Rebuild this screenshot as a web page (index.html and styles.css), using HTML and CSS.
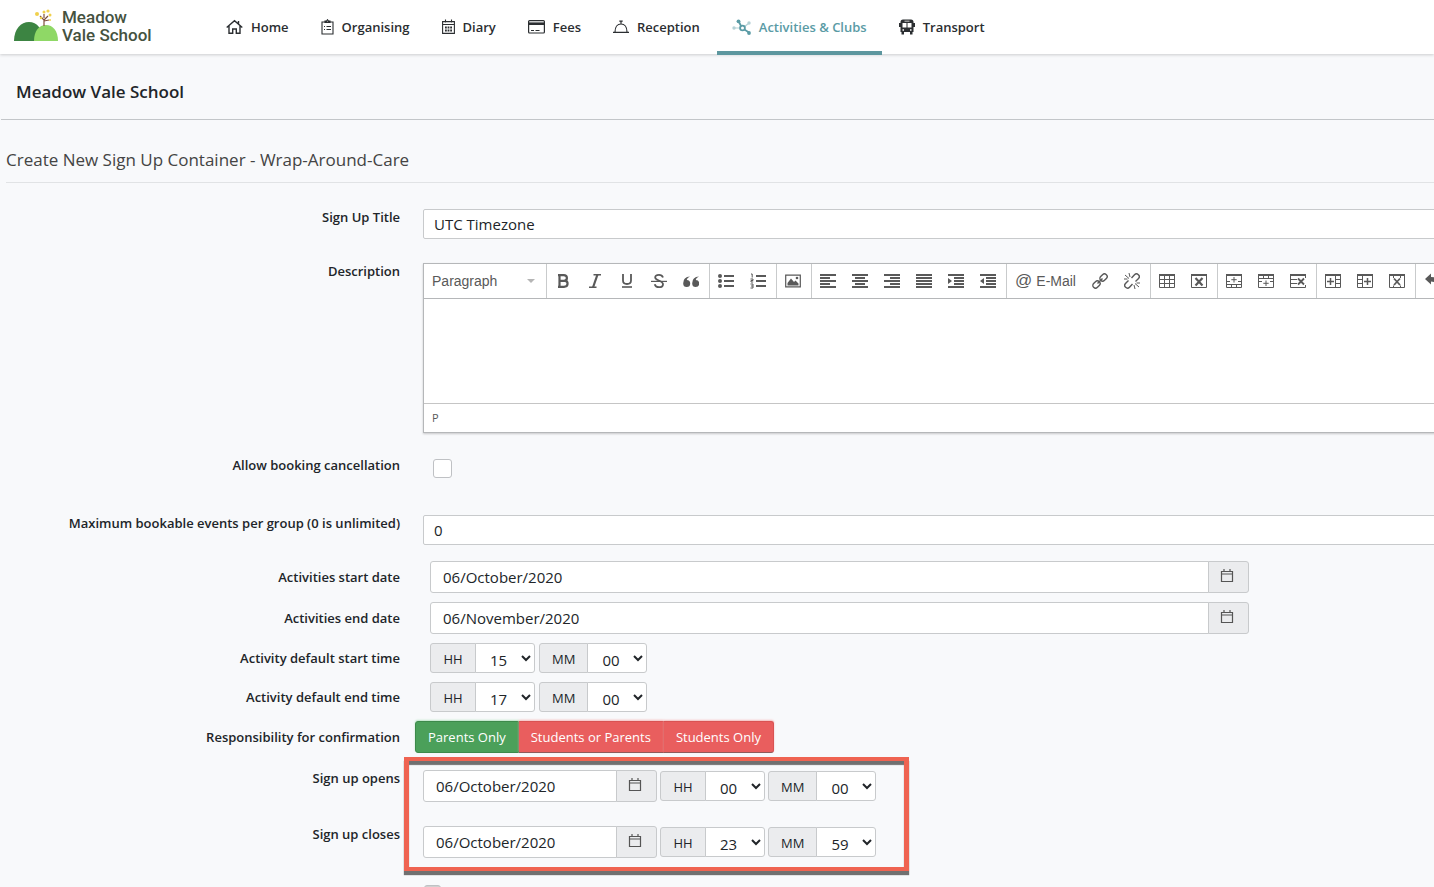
FILE: index.html
```html
<!DOCTYPE html>
<html lang="en">
<head>
<meta charset="utf-8">
<meta name="viewport" content="width=device-width, initial-scale=1">
<title>Create New Sign Up Container - Meadow Vale School</title>
<link rel="stylesheet" href="styles.css">
</head>
<body>
<svg class="defs" aria-hidden="true">
  <symbol id="calendar" viewBox="0 0 14 14"><path d="M1.5 2.500h11v10h-11zM1.500 5h11M4 0v2.500M10 0v2.500" fill="none" stroke="#555" stroke-width="1.200"/></symbol>
</svg>

<header class="topbar">
  <a class="logo" href="#">
    <svg class="logo-mark" viewBox="0 0 44 34" aria-hidden="true">
      <path d="M0 33C0 21 7 14 15 14s14 7 14 19z" fill="#3c8442"/>
      <path d="M20 33c0-10 5-16 12-16s12 6 12 16z" fill="#8fd866"/>
      <path d="M30 18v-6l-4-4M30 12l4-4M30 13l5-1M30 10V6" fill="none" stroke="#80503c" stroke-width="1.200"/>
      <g fill="#f0d04c"><circle cx="23" cy="6" r="2"/><circle cx="30" cy="4" r="1.500"/><circle cx="34" cy="3" r="1.600"/><circle cx="36" cy="7" r="1.500"/><circle cx="27" cy="10" r="1.200"/><circle cx="36" cy="12" r="1"/></g>
    </svg>
    <span class="logo-text"><span>Meadow</span><span>Vale School</span></span>
  </a>
  <nav class="nav">
    <a href="#"><svg width="17" height="16" viewBox="0 0 17 16"><path d="M.7 8.500 8.500 1.700l7.800 6.800M3 7v7.300h3.700V10h3.600v4.300H14V7M12.500 2v3" fill="none" stroke="currentColor" stroke-width="1.400"/></svg>Home</a>
    <a href="#"><svg width="13" height="16" viewBox="0 0 13 16"><path d="M1 3h11v12H1zM4 3.500V2h1.500L6.500.7 7.500 2H9v1.500zM3 7.500h1M5.500 7.500H10M3 10.500h1M5.500 10.500H10" fill="none" stroke="currentColor" stroke-width="1.100"/></svg>Organising</a>
    <a href="#"><svg width="13" height="16" viewBox="0 0 13 16"><path d="M.6 2.600h11.800v11.800H.6zM.6 5.500h11.800M3.500.5v3M9.500.5v3" fill="none" stroke="currentColor" stroke-width="1.100"/><path d="M3 8.500h7M3 11.500h7" stroke="currentColor" stroke-width="1.800" stroke-dasharray="1.800 .8"/></svg>Diary</a>
    <a href="#"><svg width="17" height="16" viewBox="0 0 17 16"><rect x=".6" y="1.600" width="15.800" height="12.400" rx="1" fill="none" stroke="currentColor" stroke-width="1.200"/><path d="M.6 4.700h15.800" stroke="currentColor" stroke-width="2.600"/><path d="M3 11.500h3M7.500 11.500h4" stroke="currentColor"/></svg>Fees</a>
    <a href="#"><svg width="16" height="16" viewBox="0 0 16 16"><path d="M0 13.400h16M2 13c0-5 2.500-8 6-8s6 3 6 8M8 5V2.500M6.300 2.200h3.400" fill="none" stroke="currentColor" stroke-width="1.200"/></svg>Reception</a>
    <a href="#" class="active" aria-current="page"><svg width="19" height="16" viewBox="0 0 19 16"><path d="m7 3 3 6 7 4.500" fill="none" stroke="currentColor" stroke-width="1.800"/><circle cx="10.500" cy="9" r="2.400" fill="#fff" stroke="currentColor" stroke-width="1.800"/><circle cx="6.500" cy="2.300" r="1.900" fill="currentColor"/><circle cx="17" cy="14" r="1.900" fill="currentColor"/><g opacity=".45" fill="currentColor"><circle cx="2" cy="9" r="1.700"/><circle cx="17" cy="4" r="1.700"/><path d="M2 8.500h6v1H2zM12 7l5-3.500.5 1L13 8z"/></g></svg>Activities &amp; Clubs</a>
    <a href="#"><svg width="16" height="16" viewBox="0 0 16 16"><path fill="currentColor" fill-rule="evenodd" d="M4 .5h8q2.500 0 2.500 2.500V4H16v4h-1.500v5h-1v2.500H11V13H5v2.500H2.500V13h-1V8H0V4h1.500V3Q1.500.5 4 .5zM3.500 4v4.500h4V4zM8.500 4v4.500h4V4zM5.500 1.700v.9h5v-.9zM3.500 10.200v1.500h1.500v-1.500zM11 10.200v1.500h1.500v-1.500z"/></svg>Transport</a>
  </nav>
</header>

<h1 class="school">Meadow Vale School</h1>

<main class="page">
  <h2 class="page-title">Create New Sign Up Container - Wrap-Around-Care</h2>

  <form class="form">
    <div class="row">
      <label for="title">Sign Up Title</label>
      <input class="text bleed" id="title" type="text" value="UTC Timezone">
    </div>

    <div class="row">
      <label for="description">Description</label>
      <div class="editor bleed">
        <div class="toolbar">
          <button type="button" class="format">Paragraph<span class="caret"></span></button>
          <div class="group">
            <button type="button" aria-label="Bold"><svg viewBox="0 0 16 16"><path d="M4.500 2.200h4.300c4 0 4 5 .8 5.500 4.300.5 3.800 6.100-.6 6.100H4.500zM3 2.200h2M3 13.800h2M5 7.800h4.500" fill="none" stroke="currentColor" stroke-width="2.200"/></svg></button>
            <button type="button" aria-label="Italic"><svg viewBox="0 0 16 16"><path d="M6.500 1.700H14M2 14.300h7.500" stroke="currentColor" stroke-width="1.400"/><path d="M10.500 1.500 6 14.500" stroke="currentColor" stroke-width="2.200"/></svg></button>
            <button type="button" aria-label="Underline"><svg viewBox="0 0 16 16"><path d="M4 1v6.500q0 3.500 4 3.500t4-3.500V1" fill="none" stroke="currentColor" stroke-width="1.800"/><path d="M3 14h10" stroke="currentColor" stroke-width="1.600"/></svg></button>
            <button type="button" aria-label="Strikethrough"><svg viewBox="0 0 16 16"><path d="M12 4.500Q11 1.800 8 1.800q-3.800 0-3.800 2.700C4.200 7.500 12 7.500 12 11.200q0 3-4 3-3.500 0-4.300-3" fill="none" stroke="currentColor" stroke-width="1.800"/><path d="M0 8.400h16" stroke="currentColor" stroke-width="1.200"/></svg></button>
            <button type="button" aria-label="Blockquote"><svg viewBox="0 0 16 16"><path fill="currentColor" d="M7 3.500Q4 4.500 3.700 7a3.500 3.500 0 1 1-3.500 3.500Q0 4 7 3.500zM16 3.500q-3 1-3.300 3.500a3.500 3.500 0 1 1-3.500 3.500Q9 4 16 3.500z"/></svg></button>
          </div>
          <div class="group">
            <button type="button" aria-label="Bullet list"><svg viewBox="0 0 16 16"><path d="M6 3h10M6 8h10M6 13h10" stroke="currentColor" stroke-width="2"/><g fill="currentColor"><circle cx="2" cy="3" r="2"/><circle cx="2" cy="8" r="2"/><circle cx="2" cy="13" r="2"/></g></svg></button>
            <button type="button" aria-label="Numbered list"><svg viewBox="0 0 16 16"><path d="M6 3h10M6 8h10M6 13h10" stroke="currentColor" stroke-width="2"/><path d="M1 1h1.200v3.500M.5 6H3v1.500H1V9h2.200M.5 11H3v4H.5M1 13h2" fill="none" stroke="currentColor"/></svg></button>
          </div>
          <div class="group">
            <button type="button" aria-label="Image"><svg viewBox="0 0 16 16"><path d="M.7 2.200h14.600v11.600H.7z" fill="none" stroke="currentColor" stroke-width="1.200"/><path fill="currentColor" d="M2.500 12.500V10L6 5.500l3 3.500 1.500-1.500 3 3v2z"/><circle cx="12" cy="5" r="1.300" fill="currentColor"/></svg></button>
          </div>
          <div class="group">
            <button type="button" aria-label="Align left"><svg viewBox="0 0 16 16"><path fill="currentColor" d="M0 1h16v2H0zM0 4h10v2H0zM0 7h16v2H0zM0 10h10v2H0zM0 13h16v2H0z"/></svg></button>
            <button type="button" aria-label="Align center"><svg viewBox="0 0 16 16"><path fill="currentColor" d="M0 1h16v2H0zM3 4h10v2H3zM0 7h16v2H0zM3 10h10v2H3zM0 13h16v2H0z"/></svg></button>
            <button type="button" aria-label="Align right"><svg viewBox="0 0 16 16"><path fill="currentColor" d="M0 1h16v2H0zM6 4h10v2H6zM0 7h16v2H0zM6 10h10v2H6zM0 13h16v2H0z"/></svg></button>
            <button type="button" aria-label="Justify"><svg viewBox="0 0 16 16"><path fill="currentColor" d="M0 1h16v2H0zM0 4h16v2H0zM0 7h16v2H0zM0 10h16v2H0zM0 13h16v2H0z"/></svg></button>
            <button type="button" aria-label="Increase indent"><svg viewBox="0 0 16 16"><path fill="currentColor" d="M0 1h16v2H0zM6 4h10v2H6zM6 7h10v2H6zM6 10h10v2H6zM0 13h16v2H0zM0 5l4 3-4 3z"/></svg></button>
            <button type="button" aria-label="Decrease indent"><svg viewBox="0 0 16 16"><path fill="currentColor" d="M0 1h16v2H0zM6 4h10v2H6zM6 7h10v2H6zM6 10h10v2H6zM0 13h16v2H0zM4 5 0 8l4 3z"/></svg></button>
          </div>
          <div class="group">
            <button type="button" class="mail"><span class="at">@</span>E-Mail</button>
            <button type="button" aria-label="Insert link"><svg viewBox="0 0 16 16"><g fill="none" stroke="currentColor" stroke-width="1.400" transform="rotate(-45 8 8)"><rect x="-1" y="5.300" width="8" height="5.400" rx="2.700"/><rect x="9" y="5.300" width="8" height="5.400" rx="2.700"/><path d="M4.500 8h7"/></g></svg></button>
            <button type="button" aria-label="Remove link"><svg viewBox="0 0 16 16"><g fill="none" stroke="currentColor" stroke-width="1.400"><path d="M7.500 5 10.500 1.800a2.700 2.700 0 0 1 4 3.700L11.500 8.500M8.500 11 5.500 14.200a2.700 2.700 0 0 1-4-3.700L4.500 7.500"/><path d="M1 2l4 3.500M5 0l1 4M0 6h3.500M15 14l-4-3.500M11 16l-1-4M16 10h-3.500" stroke-width="1"/></g></svg></button>
          </div>
          <div class="group">
            <button type="button" aria-label="Table"><svg viewBox="0 0 16 16"><path d="M.5 1.500h15v13H.5zM.5 6.500h15M.5 10.500h15M5.500 2v12M10.500 2v12" fill="none" stroke="currentColor"/><path d="M0 1h16v2H0z" fill="currentColor"/></svg></button>
            <button type="button" aria-label="Delete table"><svg viewBox="0 0 16 16"><path d="M.5 1.500h15v13H.5z" fill="none" stroke="currentColor"/><path d="M0 1h16v2H0z" fill="currentColor"/><path d="m4.500 5 7 7.500M11.500 5l-7 7.500" stroke="currentColor" stroke-width="2.200"/></svg></button>
          </div>
          <div class="group">
            <button type="button" aria-label="Insert row before"><svg viewBox="0 0 16 16"><path d="M.5 1.500h15v13H.5zM.5 8.500H4M12 8.500h3.500M0 11.500h16M5.500 11.500v3M10.500 11.500v3M8 4v5.500M5.300 6.700h5.400" fill="none" stroke="currentColor"/><path d="M0 1h16v2H0z" fill="currentColor"/></svg></button>
            <button type="button" aria-label="Insert row after"><svg viewBox="0 0 16 16"><path d="M.5 1.500h15v13H.5zM0 5.500h16M5.500 2v3.500M10.500 2v3.500M8 7.500V13M5.300 10.300h5.400M.5 8.500H4M12 8.500h3.500" fill="none" stroke="currentColor"/><path d="M0 1h16v2H0z" fill="currentColor"/></svg></button>
            <button type="button" aria-label="Delete row"><svg viewBox="0 0 16 16"><path d="M15.500 5V1.500H.5v13h15V12M.5 6.500H7M.5 10.500H7" fill="none" stroke="currentColor"/><path d="M0 1h16v2H0z" fill="currentColor"/><path d="m8 5.500 6 6M14 5.500l-6 6" stroke="currentColor" stroke-width="1.800"/></svg></button>
          </div>
          <div class="group">
            <button type="button" aria-label="Insert column before"><svg viewBox="0 0 16 16"><path d="M.5 1.500h15v13H.5zM10.500 2v12M10.500 6.500h5M10.500 10.500h5" fill="none" stroke="currentColor"/><path d="M5.500 5v7M2 8.500h7" stroke="currentColor" stroke-width="1.500"/><path d="M0 1h16v2H0z" fill="currentColor"/></svg></button>
            <button type="button" aria-label="Insert column after"><svg viewBox="0 0 16 16"><path d="M.5 1.500h15v13H.5zM5.500 2v12M.5 6.500h5M.5 10.500h5" fill="none" stroke="currentColor"/><path d="M10.500 5v7M7 8.500h7" stroke="currentColor" stroke-width="1.500"/><path d="M0 1h16v2H0z" fill="currentColor"/></svg></button>
            <button type="button" aria-label="Delete column"><svg viewBox="0 0 16 16"><path d="M.5 1.500h15v13H.5zM4.500 3v2M11.500 3v2M4.500 12.500v2M11.500 12.500v2" fill="none" stroke="currentColor"/><path d="M0 1h16v2H0z" fill="currentColor"/><path d="m5 5.500 6 6.500M11 5.500 5 12" stroke="currentColor" stroke-width="1.800"/></svg></button>
          </div>
          <div class="group">
            <button type="button" aria-label="Undo"><svg viewBox="0 0 16 16"><path fill="currentColor" d="M1 6 7 .5V4q8 0 8 7 0 2-1 4-1-6.500-7-6.500v3z"/></svg></button>
          </div>
        </div>
        <textarea id="description"></textarea>
        <div class="status">P</div>
      </div>
    </div>

    <div class="row check-row">
      <label for="cancel">Allow booking cancellation</label>
      <input id="cancel" type="checkbox">
    </div>

    <div class="row">
      <label for="max">Maximum bookable events per group (0 is unlimited)</label>
      <input class="text bleed" id="max" type="text" value="0">
    </div>

    <div class="compact">
      <div class="row">
        <label for="start">Activities start date</label>
        <div class="date wide"><input id="start" type="text" value="06/October/2020"><button type="button" aria-label="Pick date"><svg><use href="#calendar"/></svg></button></div>
      </div>
      <div class="row">
        <label for="end">Activities end date</label>
        <div class="date wide"><input id="end" type="text" value="06/November/2020"><button type="button" aria-label="Pick date"><svg><use href="#calendar"/></svg></button></div>
      </div>
      <div class="row">
        <label for="sh">Activity default start time</label>
        <div class="times">
          <div class="unit"><label for="sh">HH</label><select id="sh"><option>15</option></select></div>
          <div class="unit"><label for="sm">MM</label><select id="sm"><option>00</option></select></div>
        </div>
      </div>
      <div class="row">
        <label for="eh">Activity default end time</label>
        <div class="times">
          <div class="unit"><label for="eh">HH</label><select id="eh"><option>17</option></select></div>
          <div class="unit"><label for="em">MM</label><select id="em"><option>00</option></select></div>
        </div>
      </div>
      <div class="row">
        <span class="label" id="resp">Responsibility for confirmation</span>
        <div class="choices" role="group" aria-labelledby="resp">
          <button type="button" class="chosen" aria-pressed="true">Parents Only</button>
          <button type="button">Students or Parents</button>
          <button type="button">Students Only</button>
        </div>
      </div>
    </div>

    <div class="window">
      <div class="row">
        <label for="opens">Sign up opens</label>
        <div class="moment">
          <div class="date"><input id="opens" type="text" value="06/October/2020"><button type="button" aria-label="Pick date"><svg><use href="#calendar"/></svg></button></div>
          <div class="unit"><label for="oh">HH</label><select id="oh"><option>00</option></select></div>
          <div class="unit"><label for="om">MM</label><select id="om"><option>00</option></select></div>
        </div>
      </div>
      <div class="row">
        <label for="closes">Sign up closes</label>
        <div class="moment">
          <div class="date"><input id="closes" type="text" value="06/October/2020"><button type="button" aria-label="Pick date"><svg><use href="#calendar"/></svg></button></div>
          <div class="unit"><label for="ch">HH</label><select id="ch"><option>23</option></select></div>
          <div class="unit"><label for="cm">MM</label><select id="cm"><option>59</option></select></div>
        </div>
      </div>
      <div class="highlight"></div>
    </div>

    <div class="row next-row"><span></span><input type="checkbox" aria-label="Option"></div>
  </form>
</main>
</body>
</html>
```
FILE: styles.css
```css
* { box-sizing: border-box; }

body {
  margin: 0;
  height: 100vh;
  overflow: hidden;
  background: #f8f9fb;
  color: #212529;
  font: 13px/20px "Open Sans", "Noto Sans", sans-serif;
}

button, input, select, textarea { margin: 0; font: inherit; color: inherit; }
.defs { position: absolute; width: 0; height: 0; }

/* Header */
.topbar {
  display: flex;
  height: 54px;
  background: #fff;
  box-shadow: 0 1px 3px rgba(0, 0, 0, .18);
}
.logo {
  display: flex;
  flex: none;
  width: 211px;
  padding: 8px 0 0 14px;
  gap: 4px;
  color: #45523f;
  text-decoration: none;
}
.logo-mark { width: 44px; height: 34px; }
.logo-text {
  display: flex;
  flex-direction: column;
  font: 500 17px/18px Roboto, sans-serif;
}
.nav { display: flex; gap: 2px; }
.nav a {
  display: flex;
  align-items: center;
  gap: 8px;
  height: 55px;
  padding: 0 15px 2px;
  color: #2b2e31;
  font-weight: 600;
  text-decoration: none;
  white-space: nowrap;
}
.nav .active { color: #5a9ba5; box-shadow: inset 0 -4px #5d979f; }

/* Headings */
.school {
  margin: 0 0 0 1px;
  padding: 26px 15px 15px;
  border-bottom: 1px solid #c3c6c9;
  font: 600 17px/24px "Open Sans", sans-serif;
}
.page { overflow: hidden; }
.page-title {
  margin: 28px 0 0 6px;
  padding-bottom: 10px;
  border-bottom: 1px solid #e1e3e5;
  color: #444;
  font: 400 17px/24px "Open Sans", sans-serif;
}

/* Form rows */
.form { display: flex; flex-direction: column; gap: 22px; padding-top: 24px; }
.row {
  display: grid;
  grid-template-columns: 29.5% minmax(0, 1fr);
  align-items: start;
}
.row > label, .row > .label {
  padding-right: 23px;
  font-weight: 600;
  text-align: right;
}
.bleed { width: calc(100% + 12px); margin-top: 2px; }
.text {
  height: 30px;
  padding: 0 10px;
  border: 1px solid #c8cacc;
  border-radius: 2px;
  background: #fff;
  font-size: 15px;
}
input[type="checkbox"] {
  appearance: none;
  width: 19px;
  height: 19px;
  margin: 4px 0 0 10px;
  border: 1px solid #bfc1c4;
  border-radius: 3px;
  background: #fff;
}
.check-row { min-height: 36px; }
.next-row { margin-top: 1px; }
.next-row input[type="checkbox"] { width: 17px; margin-left: 1px; background: #d0d0d0; }

/* Rich text editor */
.editor {
  border: 1px solid #b5b7b9;
  background: #fff;
  box-shadow: 0 1px 2px rgba(0, 0, 0, .2);
  color: #595959;
}
.toolbar {
  display: flex;
  height: 35px;
  border-bottom: 1px solid #b5b7b9;
  overflow: hidden;
  font: 14px/20px "Liberation Sans", Arial, sans-serif;
}
.toolbar button {
  display: flex;
  flex: none;
  align-items: center;
  justify-content: center;
  width: 32px;
  padding: 0;
  border: 0;
  background: none;
}
.toolbar svg { width: 16px; height: 16px; }
.toolbar .format { justify-content: space-between; width: 122px; padding: 0 11px 0 8px; }
.caret { border: 4px solid transparent; border-top-color: #b5b5b5; border-bottom: 0; }
.group { display: flex; flex: none; padding-right: 2px; border-left: 1px solid #c9cbcc; }
.toolbar .mail { width: 77px; gap: 4px; }
.at { font-size: 17px; }
.editor textarea {
  display: block;
  width: 100%;
  height: 104px;
  padding: 8px;
  border: 0;
  resize: none;
}
.status {
  height: 29px;
  padding: 4px 8px;
  border-top: 1px solid #c5c5c5;
  font-size: 11px;
}

/* Dates, times and choices */
.compact { display: flex; flex-direction: column; gap: 9px; margin-top: -6px; }
.compact .row { align-items: center; }
.date { display: flex; height: 32px; }
.date input {
  flex: 1;
  min-width: 0;
  padding: 0 12px;
  border: 1px solid #c8cacc;
  border-radius: 3px 0 0 3px;
  background: #fff;
  font-size: 15px;
}
.date button {
  display: grid;
  place-items: center;
  width: 41px;
  margin-left: -1px;
  padding: 0 3px 2px 0;
  border: 1px solid #c8cacc;
  border-radius: 0 3px 3px 0;
  background: #ebecee;
}
.date svg { width: 14px; height: 14px; }
.wide { width: 81%; margin-left: 7px; }
.times { display: flex; gap: 4px; margin-left: 7px; }
.unit { display: flex; height: 30px; }
.unit label {
  min-width: 46px;
  padding: 5px 12px 0;
  border: 1px solid #c8cacc;
  border-radius: 3px 0 0 3px;
  background: #ebecee;
  line-height: 20px;
  text-align: center;
}
.unit select {
  width: 60px;
  margin-left: -1px;
  padding: 4px 0 0 10px;
  border: 1px solid #c8cacc;
  border-radius: 0 3px 3px 0;
  background: #fff;
  font-size: 15px;
}
.choices { display: flex; margin-left: -8px; }
.choices button {
  height: 32px;
  padding: 0 12px;
  border: 1px solid #d95353;
  border-left-width: 0;
  border-bottom-color: #8e5a5a;
  background: #e95e5e;
  box-shadow: 0 -1px 2px #f6b9b9;
  color: #fff;
}
.choices .chosen {
  border-color: #3d8a4b;
  border-left-width: 1px;
  border-radius: 3px 0 0 3px;
  background: #4ba05a;
  box-shadow: 0 -1px 2px #b9e6c4;
}
.choices button:last-child { border-radius: 0 3px 3px 0; }

/* Sign up window */
.window { position: relative; display: flex; flex-direction: column; gap: 22px; margin-top: -7px; }
.moment { display: flex; align-items: center; gap: 3px; margin-top: 2px; }
.moment .date { width: 234px; }
.highlight {
  position: absolute;
  top: -11px;
  bottom: -13px;
  left: calc(29.5% - 19px);
  width: 505px;
  border: solid #ef6351;
  border-width: 4px 5px;
  box-shadow: 0 4px 1px #707070, inset 0 4px 1px #707070;
  pointer-events: none;
}
```
